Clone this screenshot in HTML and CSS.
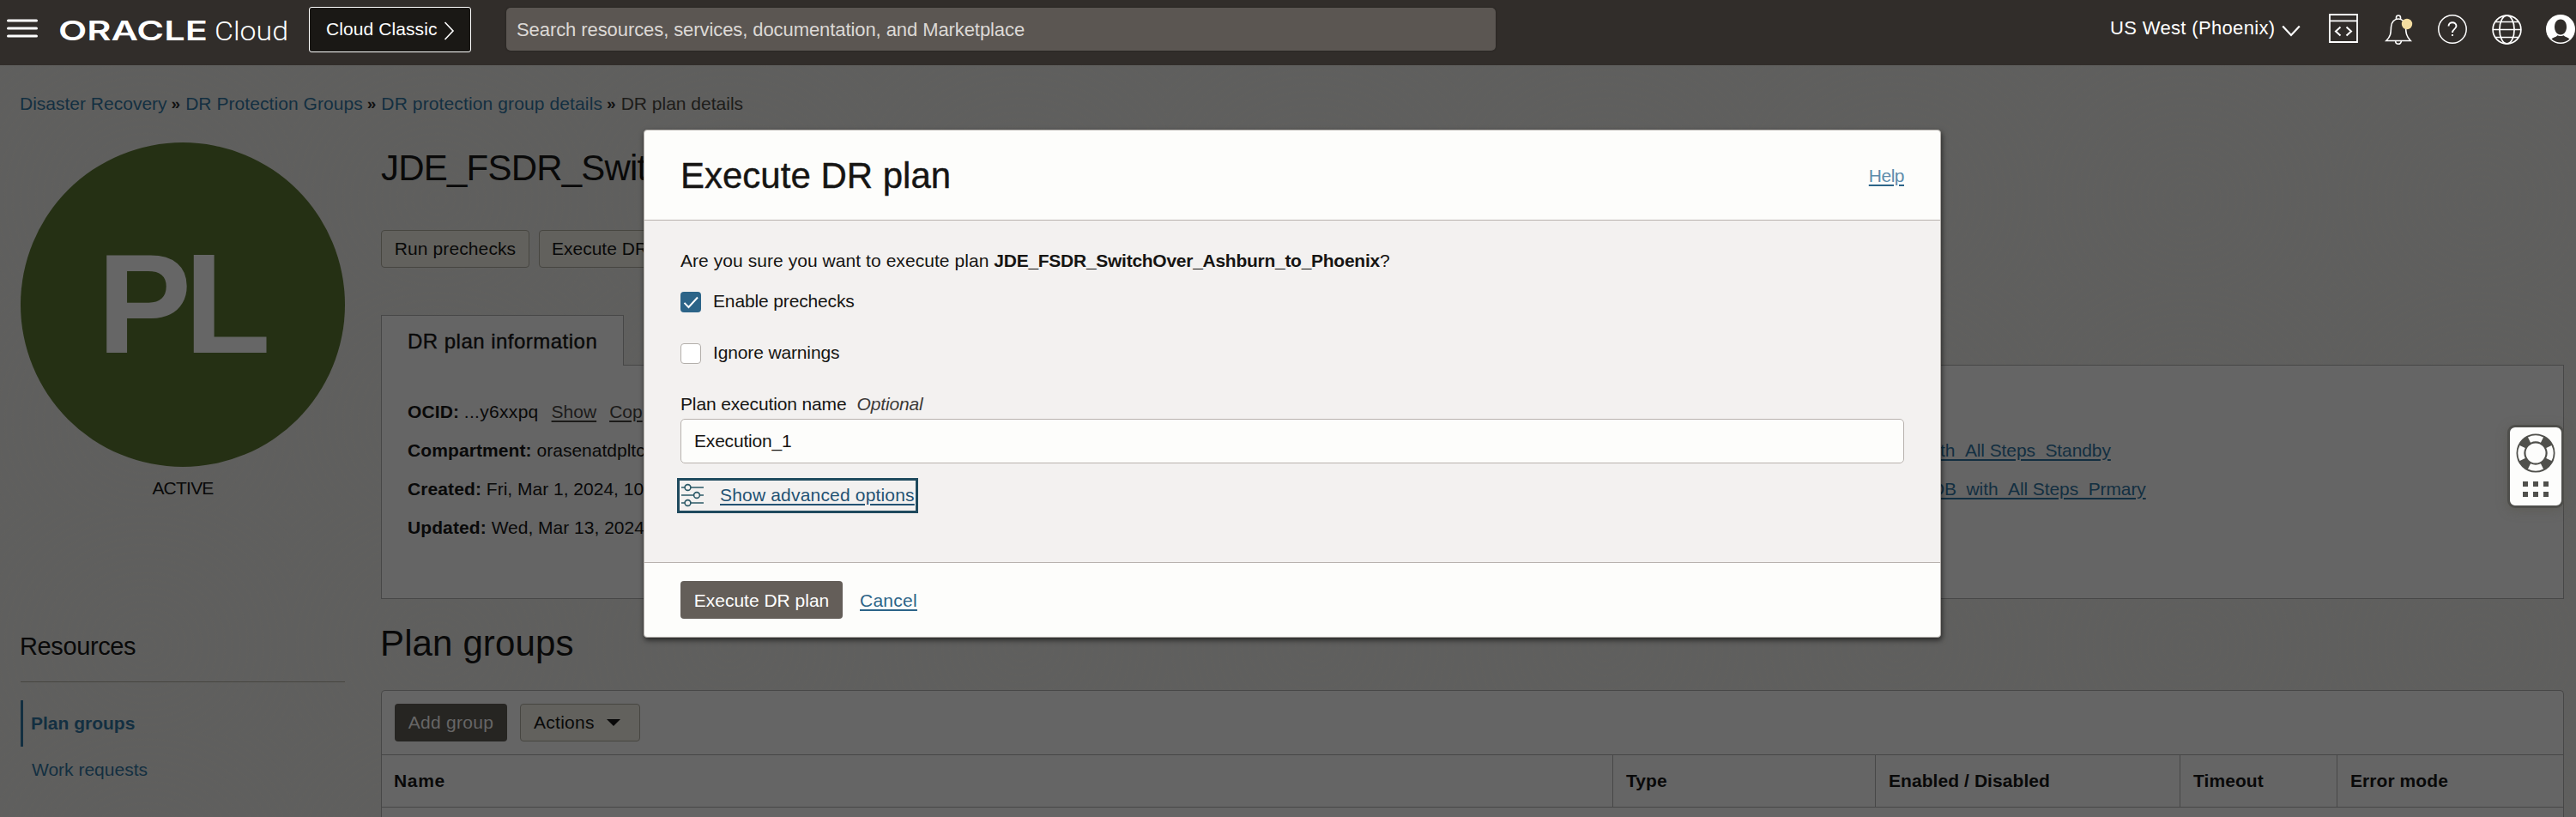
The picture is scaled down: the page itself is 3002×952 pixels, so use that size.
FILE: index.html
```html
<!DOCTYPE html>
<html lang="en">
<head>
<meta charset="utf-8">
<title>DR plan details</title>
<link rel="stylesheet" href="styles.css">
</head>
<body>
<header class="topbar">
  <svg class="burger" width="36" height="22" viewBox="0 0 36 22" stroke="#fff" stroke-width="3" stroke-linecap="round"><path d="M1.5 2H34.5M1.5 11H34.5M1.5 20H34.5"/></svg>
  <svg class="logo" width="268" height="40" viewBox="0 0 268 40" fill="#fff">
    <text class="logo-oracle" x="-1" y="29" textLength="174" lengthAdjust="spacingAndGlyphs">ORACLE</text>
    <text class="logo-cloud" x="181" y="28.5" textLength="86" lengthAdjust="spacingAndGlyphs">Cloud</text>
  </svg>
  <a class="classic"><span>Cloud Classic</span><svg width="13" height="22" viewBox="0 0 13 22" fill="none" stroke="#fff" stroke-width="1.6"><path d="M1.5 1L11 11L1.5 21"/></svg></a>
  <div class="search">Search resources, services, documentation, and Marketplace</div>
  <span class="region">US West (Phoenix)</span>
  <svg class="region-arrow" width="22" height="14" viewBox="0 0 22 14" fill="none" stroke="#fff" stroke-width="2.2"><path d="M1.2 1.5L11 12L20.8 1.5"/></svg>
  <svg class="icon-dev" width="34" height="34" viewBox="0 0 34 34" fill="none" stroke="#fff" stroke-width="1.8"><path d="M1 1H33V33H1ZM1 8.3H33"/><path stroke-width="2" d="M13.5 15.5L8 20.5L13.5 25.5M20.5 15.5L26 20.5L20.5 25.5"/></svg>
  <svg class="icon-bell" width="34" height="38" viewBox="0 0 34 38" fill="none" stroke="#fff" stroke-width="1.6"><path d="M1.8 31.5C7.5 26 7.2 22 7.5 15.5C7.8 9.5 11.5 6 16 6C20.5 6 24.2 9.5 24.5 15.5C24.8 22 25 26 30.2 31.5Z"/><path d="M13.5 6V4.5A2.5 2.5 0 0 1 18.500 4.500V6M12.700 32A3.300 3.300 0 0 0 19.300 32"/><circle cx="26" cy="12" r="6.200" fill="#f3dca0" stroke="none"/></svg>
  <svg class="icon-help" width="34" height="34" viewBox="0 0 34 34" fill="none" stroke="#fff" stroke-width="1.500"><circle cx="17" cy="17" r="16.200"/><path stroke-width="1.900" d="M12.500 13.500C12.500 7.800 21.500 7.800 21.500 13.300C21.500 17 17 16.800 17 21M17 23V25"/></svg>
  <svg class="icon-globe" width="35" height="35" viewBox="0 0 35 35" fill="none" stroke="#fff" stroke-width="1.700"><circle cx="17.500" cy="17.500" r="16.400"/><ellipse cx="17.500" cy="17.500" rx="8.600" ry="16.400"/><path d="M4 8.500H31M1 17.500H34M4 26.500H31"/></svg>
  <svg class="icon-user" width="34" height="34" viewBox="0 0 34 34"><circle cx="17" cy="17" r="17" fill="#fff"/><path d="M17 5.500C21.500 5.500 24 9.500 24 14.500C24 19.500 21 23.500 17 23.500C13 23.500 10 19.500 10 14.500C10 9.500 12.500 5.500 17 5.500Z" fill="#312d2a"/><path d="M6.500 28.600C8.500 26.200 12 26.200 13.300 24.200C15 25.200 19 25.200 20.700 24.200C22 26.200 25.500 26.200 27.500 28.600C24.500 31.200 21 32.600 17 32.600C13 32.600 9.500 31.200 6.500 28.600Z" fill="#312d2a"/></svg>
</header>

<div class="page">
  <nav class="crumbs">
    <a class="c1">Disaster Recovery</a><b>»</b><a class="c2">DR Protection Groups</a><b>»</b><a class="c3">DR protection group details</a><b>»</b><span>DR plan details</span>
  </nav>
  <div class="columns">
    <aside class="side">
      <div class="badge"><span>PL</span></div>
      <div class="status">ACTIVE</div>
      <h3 class="side-title">Resources</h3>
      <a class="nav-item nav-active">Plan groups</a>
      <a class="nav-item">Work requests</a>
    </aside>
    <main class="content">
      <h1 class="title">JDE_FSDR_Swit</h1>
      <div class="actions">
        <button class="btn run">Run prechecks</button>
        <button class="btn exec">Execute DR</button>
      </div>
      <div class="tab">DR plan information</div>
      <section class="panel">
        <div class="details">
          <p><strong>OCID:</strong> <span class="ocid">...y6xxpq</span><a class="plain">Show</a><a class="plain">Cop</a></p>
          <p><strong>Compartment:</strong> orasenatdpltc</p>
          <p><strong>Created:</strong> Fri, Mar 1, 2024, 10</p>
          <p><strong>Updated:</strong> Wed, Mar 13, 2024</p>
        </div>
        <div class="peers">
          <a>th_All Steps_Standby</a>
          <a class="peer-long">DB_with_All Steps_Prmary</a>
        </div>
      </section>
      <h2 class="subtitle">Plan groups</h2>
      <section class="table">
        <div class="toolbar">
          <button class="add">Add group</button>
          <button class="btn menu"><span>Actions</span><i class="caret"></i></button>
        </div>
        <div class="thead">
          <div>Name</div><div>Type</div><div>Enabled / Disabled</div><div>Timeout</div><div>Error mode</div>
        </div>
      </section>
    </main>
  </div>
</div>

<div class="widget">
  <svg width="46" height="46" viewBox="-23 -23 46 46"><circle r="17" fill="none" stroke="#50504c" stroke-width="11"/><g fill="none" stroke="#fdfdfc" stroke-width="7"><path d="M-7.500 -15.400A17.100 17.100 0 0 1 7.500 -15.400M15.400 -7.500A17.100 17.100 0 0 1 15.400 7.500M7.500 15.400A17.100 17.100 0 0 1 -7.500 15.400M-15.400 7.500A17.100 17.100 0 0 1 -15.400 -7.500"/></g></svg>
  <div class="dots"><i></i><i></i><i></i><i></i><i></i><i></i></div>
</div>

<div class="modal">
  <div class="modal-head"><h2>Execute DR plan</h2><a class="help">Help</a></div>
  <div class="modal-body">
    <p class="ask"><span>Are you sure you want to execute plan </span><strong>JDE_FSDR_SwitchOver_Ashburn_to_Phoenix</strong>?</p>
    <label class="check"><span class="box box-on"><svg width="24" height="24" viewBox="0 0 24 24" fill="none" stroke="#fff" stroke-width="1.900"><path d="M4.500 12.800L9.500 18L20 6.500"/></svg></span><span>Enable prechecks</span></label>
    <label class="check check-2"><span class="box"></span><span>Ignore warnings</span></label>
    <div class="field-label">Plan execution name<em>Optional</em></div>
    <div class="field">Execution_1</div>
    <div class="advanced">
      <svg width="28" height="28" viewBox="0 0 28 28" fill="none" stroke="#2c5967" stroke-width="1.600"><path d="M1 5H5M12 5H27M1 14H15.500M22.500 14H27M1 23H5M12 23H27"/><circle cx="8.500" cy="5" r="3.400"/><circle cx="19" cy="14" r="3.400"/><circle cx="8.500" cy="23" r="3.400"/></svg>
      <a>Show advanced options</a>
    </div>
  </div>
  <div class="modal-foot"><button class="primary">Execute DR plan</button><a class="cancel">Cancel</a></div>
</div>
</body>
</html>
```
FILE: styles.css
```css
* { box-sizing: border-box; }
html, body { margin: 0; height: 952px; overflow: hidden; }
body {
  position: relative;
  font: 21px/24px "Liberation Sans", Arial, sans-serif;
  color: #090909;
  background: #5f5f5e;
}
h1, h2, h3, p { margin: 0; font-weight: normal; }
button { font: inherit; margin: 0; padding: 0; }

.topbar {
  display: flex;
  align-items: flex-start;
  height: 76px;
  padding-left: 8px;
  background: #312d2a;
  color: #fff;
}
.topbar > * { flex: none; }
.burger { margin-top: 22px; }
.logo { margin: 18px 0 0 25px; overflow: visible; }
.logo-oracle { font: 600 31.5px Inter, sans-serif; }
.logo-cloud { font: 300 32px Roboto, sans-serif; }
.classic {
  display: flex;
  align-items: center;
  gap: 7px;
  width: 189px;
  height: 53px;
  margin: 8px 0 0 23px;
  padding: 0 0 1px 19px;
  border: 1.500px solid #fff;
  border-radius: 3px;
  background: #1a1815;
  letter-spacing: 0.09px;
}
.classic svg { margin-top: 3px; }
.search {
  width: 1153px;
  height: 50px;
  margin: 9px 0 0 41px;
  padding-left: 12px;
  border-radius: 5px;
  background: #5b5652;
  box-shadow: 0 0 2px #1e1b19;
  color: #dcd9d6;
  font-size: 22px;
  line-height: 51px;
  letter-spacing: -0.080px;
}
.region { width: 192px; margin: 21px 0 0 auto; font-size: 22px; letter-spacing: 0.340px; white-space: nowrap; }
.region-arrow { margin: 29px 0 0 8px; }
.icon-dev { margin: 16px 0 0 33px; }
.icon-bell { margin: 16px 0 0 31px; }
.icon-help { margin: 17px 0 0 28px; }
.icon-globe { margin: 17px 0 0 29px; }
.icon-user { margin: 17px 1px 0 28px; }

.page {
  height: 876px;
  padding: 33px 14px 0 24px;
  overflow: hidden;
  background:
    repeating-radial-gradient(ellipse at 50% 60%, rgba(104, 100, 88, 0.120) 0 2px, transparent 4px 9px) 0 0 / 340px 260px,
    #5f5f5e;
}
.crumbs { display: flex; height: 24px; margin-left: -1px; color: #1d1c1a; }
.crumbs a { color: #132f41; }
.crumbs b { margin: 0 6px 0 5px; font-size: 19px; line-height: 24px; color: #111; }
.c2 { letter-spacing: 0.060px; }
.c3 { letter-spacing: 0.120px; }
.columns { display: grid; grid-template-columns: 378px 1fr; column-gap: 42px; }

.badge {
  display: flex;
  align-items: center;
  justify-content: center;
  height: 378px;
  margin-top: 33px;
  padding: 0 6px 2px 0;
  border-radius: 50%;
  background: #253014;
  color: #666;
  font: bold 165px/190px "Liberation Sans", Arial, sans-serif;
  letter-spacing: -8.600px;
}
.status { margin-top: 13px; text-align: center; letter-spacing: -0.770px; }
.side-title {
  margin: 154px 0 21px;
  height: 60px;
  padding-left: -1px;
  border-bottom: 1px solid #474641;
  font-size: 29px;
  line-height: 36px;
  letter-spacing: -0.390px;
  text-indent: -1px;
}
.nav-item { display: block; height: 54px; padding-left: 13px; line-height: 54px; color: #132f41; }
.nav-active { padding-left: 9px; border-left: 3px solid #132f41; font-weight: bold; }

.title { margin-top: 38px; font-size: 42px; line-height: 50px; letter-spacing: -0.790px; }
.actions { display: flex; gap: 11px; margin-top: 47px; }
.btn { height: 44px; border: 1px solid #474641; border-radius: 4px; background: #62615d; color: #090909; }
.run { width: 173px; letter-spacing: 0.100px; }
.exec { width: 190px; padding-left: 14px; text-align: left; }
.tab {
  position: relative;
  width: 283px;
  height: 59px;
  margin: 55px 0 -1px;
  padding-left: 30px;
  border: 1px solid #474747;
  border-bottom: 0;
  background: #656565;
  font-size: 24px;
  line-height: 59px;
  letter-spacing: 0.480px;
  -webkit-text-stroke: 0.400px #090909;
}
.panel {
  display: grid;
  grid-template-columns: 1786px 1fr;
  height: 273px;
  padding: 31px 0 0 30px;
  border: 1px solid #474747;
  background: #656565;
  line-height: 45px;
}
.details { white-space: nowrap; }
.details strong { letter-spacing: 0.100px; }
.ocid { letter-spacing: 0.300px; }
.plain { margin-left: 15px; color: #1c1b1a; text-decoration: underline; text-decoration-thickness: 2px; text-underline-offset: 3px; }
.peers { display: flex; flex-direction: column; align-items: flex-start; padding-top: 45px; }
.peers a { color: #132f41; text-decoration: underline; text-decoration-thickness: 2px; text-underline-offset: 3px; letter-spacing: -0.100px; }
.peer-long { margin-left: -10px; }
.subtitle { margin: 27px 0 29px -1px; font-size: 42px; line-height: 50px; letter-spacing: 0.130px; }
.table { height: 148px; border: 1px solid #474747; border-bottom: 0; border-radius: 5px 5px 0 0; background: #656565; }
.toolbar { display: flex; gap: 15px; height: 75px; padding: 15px; border-bottom: 1px solid #474747; }
.add { width: 131px; height: 44px; border: 0; border-radius: 4px; background: #262522; color: #666; letter-spacing: 0.270px; }
.menu { display: flex; align-items: center; width: 140px; padding-left: 15px; letter-spacing: 0.270px; }
.caret { margin-left: 14px; border: solid transparent; border-width: 8px 8px 0; border-top-color: #090909; }
.thead {
  display: grid;
  grid-template-columns: 1434px 306px 355px 183px 1fr;
  height: 61px;
  border-bottom: 1px solid #474747;
  font-weight: bold;
  line-height: 60px;
  letter-spacing: 0.070px;
}
.thead > div { padding-left: 15px; }
.thead > div + div { border-left: 1px solid #474747; }
.thead > div:first-child { padding-left: 14px; letter-spacing: 0.700px; }

.widget {
  position: absolute;
  left: 2922px;
  top: 495px;
  width: 66px;
  height: 97px;
  padding: 7px 0 0 7px;
  border: 3px solid #4e4e4b;
  border-radius: 9px;
  background: #fdfdfc;
  box-shadow: 0 3px 12px rgba(90, 88, 80, 0.600);
}
.widget svg { display: block; }
.dots { display: grid; grid-template-columns: repeat(3, 6px); gap: 6px; padding: 10px 0 0 8px; }
.dots i { width: 6px; height: 6px; background: #50504c; }

.modal {
  position: absolute;
  left: 750px;
  top: 151px;
  width: 1512px;
  height: 592px;
  border: 1px solid #b3afab;
  border-radius: 4px;
  background: #fdfdfb;
  box-shadow: 1px 3px 6px rgba(0, 0, 0, 0.600);
  color: #161513;
  overflow: hidden;
}
.modal-head { display: flex; justify-content: space-between; align-items: center; height: 105px; padding: 2px 42px 0; border-bottom: 1px solid #b8b2ae; }
.modal-head h2 { font-size: 42px; line-height: 50px; -webkit-text-stroke: 0.400px #161513; }
.help { color: #5d8cab; letter-spacing: -0.500px; text-decoration: underline #2c6488 2px; text-underline-offset: 3px; }
.modal-body { height: 399px; padding: 35px 42px 0; border-bottom: 1px solid #b8b2ae; background: #f3f1f0; }
.ask { height: 24px; white-space: pre; }
.ask span { letter-spacing: 0.060px; }
.ask strong { letter-spacing: -0.270px; }
.check { display: flex; gap: 14px; height: 24px; margin-top: 24px; line-height: 22px; letter-spacing: -0.140px; }
.check-2 { margin-top: 36px; }
.box { width: 24px; height: 24px; border: 1px solid #b3afab; border-radius: 4px; background: #fff; }
.box-on { border: 0; background: #2c6488; }
.box svg { display: block; }
.field-label { margin-top: 35px; letter-spacing: -0.140px; }
.field-label em { margin-left: 12px; color: #3c3a38; }
.field {
  height: 52px;
  margin-top: 5px;
  padding-left: 15px;
  border: 1px solid #b8b2ae;
  border-radius: 5px;
  background: #fdfdfb;
  line-height: 50px;
  letter-spacing: -0.190px;
}
.advanced { display: flex; align-items: center; width: 281px; height: 41px; margin: 17px 0 0 -4px; padding: 0 0 1px 1px; border: 3px solid #1f4a5e; color: #235273; }
.advanced a { margin-left: 18px; white-space: nowrap; letter-spacing: 0.180px; text-decoration: underline 2px; text-underline-offset: 3px; }
.modal-foot { display: flex; padding: 21px 42px; }
.primary { width: 189px; height: 44px; border: 0; border-radius: 4px; background: #645e59; color: #fff; line-height: 46px; }
.cancel { margin-left: 20px; line-height: 46px; color: #2c6488; letter-spacing: 0.260px; text-decoration: underline 2px; text-underline-offset: 3px; }
```
